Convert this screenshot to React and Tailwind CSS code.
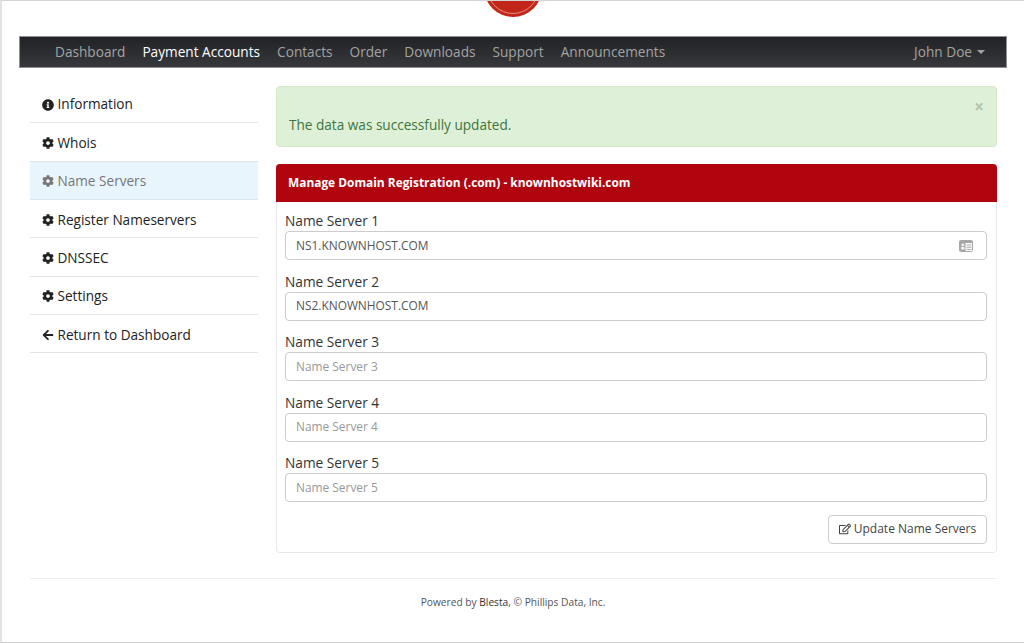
import React from 'react'
import { FaInfoCircle, FaCog, FaArrowLeft, FaRegEdit } from 'react-icons/fa'

const navLinks = ['Dashboard', 'Payment Accounts', 'Contacts', 'Order', 'Downloads', 'Support', 'Announcements']

const sideLinks = [
  { label: 'Information', icon: FaInfoCircle },
  { label: 'Whois', icon: FaCog },
  { label: 'Name Servers', icon: FaCog, active: true },
  { label: 'Register Nameservers', icon: FaCog },
  { label: 'DNSSEC', icon: FaCog },
  { label: 'Settings', icon: FaCog },
  { label: 'Return to Dashboard', icon: FaArrowLeft },
]

const servers = [
  { label: 'Name Server 1', value: 'NS1.KNOWNHOST.COM', card: true },
  { label: 'Name Server 2', value: 'NS2.KNOWNHOST.COM' },
  { label: 'Name Server 3' },
  { label: 'Name Server 4' },
  { label: 'Name Server 5' },
]

// Gray contact card inside the first input
const CardIcon = () => (
  <svg width="14" height="12" viewBox="0 0 14 12" className="block">
    <rect x="0.5" y="0.5" width="13" height="11" rx="1" fill="#fff" stroke="#a6a6a6" />
    <rect x="1" y="1" width="12" height="2" fill="#a6a6a6" />
    <rect x="1" y="1" width="5.5" height="10" fill="#a6a6a6" />
    <circle cx="3.8" cy="5" r="1.4" fill="#f2f2f2" />
    <rect x="2" y="7" width="3.6" height="2.6" rx="0.8" fill="#f2f2f2" />
    <rect x="7.5" y="4.5" width="5" height="1" fill="#a6a6a6" />
    <rect x="7.5" y="6.7" width="5" height="1" fill="#a6a6a6" />
    <rect x="7.5" y="8.9" width="5" height="1" fill="#a6a6a6" />
  </svg>
)

const App = () => {
  return (
    <div className="w-[1024px] h-[643px] overflow-hidden bg-white border-t border-b border-l-2 border-t-[#d4d4d4] border-b-[#cfcfcf] border-l-[#e2e2e2] font-['Open_Sans',sans-serif] text-[#333]">
      {/* Logo, cut off by the top of the window */}
      <div className="h-[35px] flex justify-center pr-[1px]">
        <svg width="60" height="16" viewBox="0 0 60 16" className="block">
          <circle cx="30" cy="-13" r="29" fill="#c2261a" />
          <circle cx="30" cy="-13" r="25.5" fill="none" stroke="#e58f84" strokeWidth="1" />
        </svg>
      </div>

      {/* Top nav */}
      <div className="ml-[17px] w-[988px] h-[32px] flex items-center justify-between pl-[35px] pr-[21px] bg-gradient-to-b from-[#222326] to-[#37383b] border border-[#8f8f8f] text-[13.65px] text-[#a3a3a3]">
        <div className="flex gap-[17px]">
          {navLinks.map((link) => (
            <span key={link} className={link === 'Payment Accounts' ? 'text-white' : ''}>
              {link}
            </span>
          ))}
        </div>
        <div className="flex items-center gap-[5px]">
          <span>John Doe</span>
          <span className="w-0 h-0 border-x-[4px] border-x-transparent border-t-[4px] border-t-[#a3a3a3]"></span>
        </div>
      </div>

      <div className="ml-[28px] w-[967px] flex gap-[18px] mt-[18px]">
        {/* Sidebar */}
        <div className="w-[228px] shrink-0 -mt-[1px]">
          {sideLinks.map(({ label, icon: Icon, active }) => (
            <div
              key={label}
              className={`h-[38.35px] flex items-center gap-[3.5px] pl-[12px] pt-[2px] border-b text-[13.6px] ${
                active ? 'bg-[#e9f5fc] border-[#dde6ec] text-[#777]' : 'border-[#e4e4e4] text-[#222]'
              }`}
            >
              <Icon className="w-[12px] h-[12px]" />
              <span>{label}</span>
            </div>
          ))}
        </div>

        {/* Main column */}
        <div className="w-[721px] shrink-0">
          <div className="relative h-[61px] rounded bg-[#dff0d8] border border-[#d6e9c6] pl-[12px] pt-[28px] text-[13.6px] leading-[20px] text-[#3c763d]">
            The data was successfully updated.
            <span className="absolute right-[12px] top-[10px] text-[#b5c5ae] text-[17px] leading-[20px] font-bold">×</span>
          </div>

          <div className="mt-[17px] h-[389px] rounded border border-[#e8e8e8]">
            <div className="-mx-px -mt-px h-[38px] flex items-center pl-[12px] bg-[#b0040e] rounded-t text-white text-[11.9px] font-bold">
              Manage Domain Registration (.com) - knownhostwiki.com
            </div>
            <div className="pl-[8px] pr-[9px] pt-[10px]">
              {servers.map((s) => (
                <div key={s.label} className="mb-[12.5px]">
                  <div className="text-[13.7px] leading-[18px] mb-[1px] text-[#333]">{s.label}</div>
                  <div className="h-[29px] flex items-center justify-between pl-[10px] pr-[13px] border border-[#ccc] rounded text-[11.9px]">
                    <span className={s.value ? 'text-[#555]' : 'text-[#999]'}>{s.value || s.label}</span>
                    {s.card && <CardIcon />}
                  </div>
                </div>
              ))}
              <div className="flex justify-end">
                <button className="w-[159px] h-[29px] flex items-center justify-center gap-[3px] border border-[#ccc] rounded bg-white text-[12px] text-[#444]">
                  <FaRegEdit className="w-[12px] h-[12px]" />
                  Update Name Servers
                </button>
              </div>
            </div>
          </div>
        </div>
      </div>

      {/* Footer */}
      <div className="ml-[28px] w-[967px] mt-[25px] border-t border-[#eee] pt-[16px] text-center text-[10.2px] leading-[14px] text-[#555] pr-[1px]">
        Powered by <span className="text-[#333]">Blesta</span>, © Phillips Data, Inc.
      </div>
    </div>
  )
}

export default App
